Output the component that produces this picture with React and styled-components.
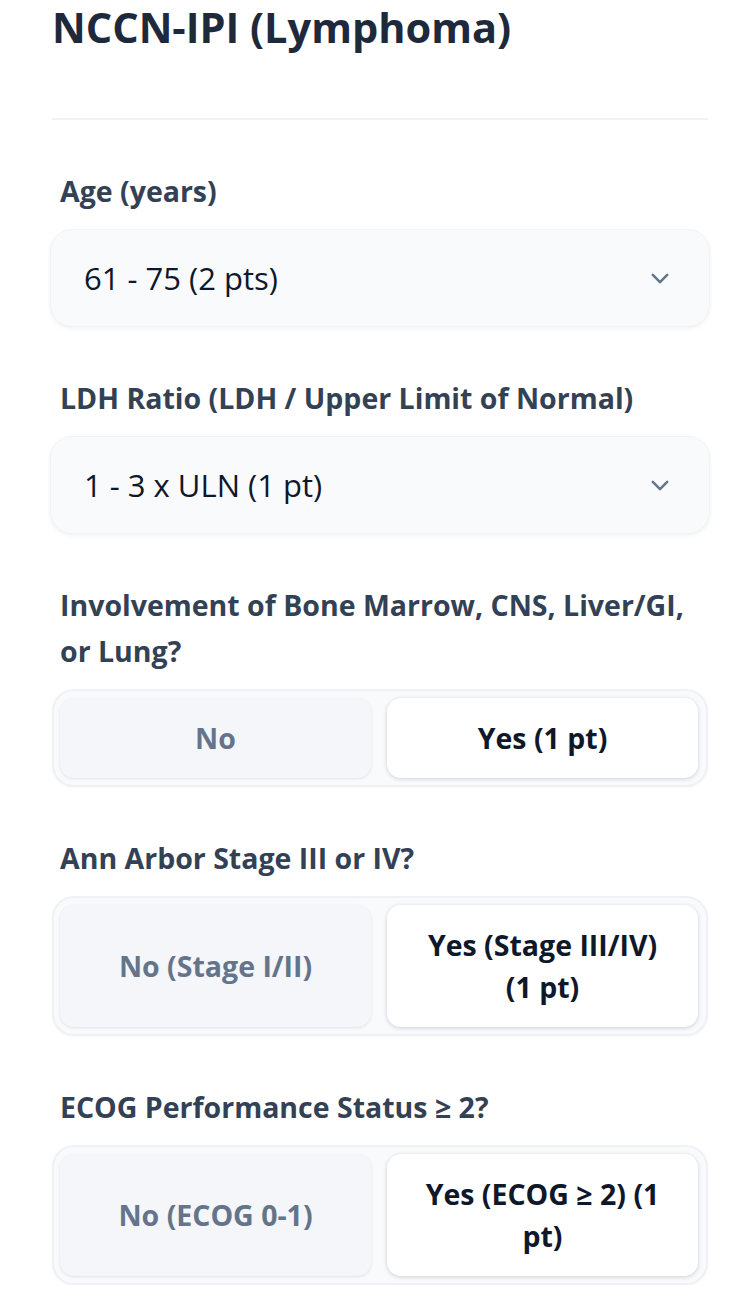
import React, { useState } from 'react';
import styled, { createGlobalStyle } from 'styled-components';

const GlobalStyle = createGlobalStyle`
  body {
    margin: 0;
    background: #ffffff;
    font-family: "Open Sans", "Noto Sans", sans-serif;
  }
`;

const fields = [
  {
    id: 'age',
    type: 'select',
    label: 'Age (years)',
    value: '61 - 75 (2 pts)',
  },
  {
    id: 'ldh',
    type: 'select',
    label: 'LDH Ratio (LDH / Upper Limit of Normal)',
    value: '1 - 3 x ULN (1 pt)',
  },
  {
    id: 'extranodal',
    type: 'toggle',
    label: 'Involvement of Bone Marrow, CNS, Liver/GI, or Lung?',
    options: ['No', 'Yes (1 pt)'],
    selected: 1,
  },
  {
    id: 'stage',
    type: 'toggle',
    label: 'Ann Arbor Stage III or IV?',
    options: ['No (Stage I/II)', 'Yes (Stage III/IV) (1\u00a0pt)'],
    selected: 1,
  },
  {
    id: 'ecog',
    type: 'toggle',
    label: 'ECOG Performance Status \u2265 2?',
    options: ['No (ECOG 0-1)', 'Yes (ECOG \u2265 2) (1 pt)'],
    selected: 1,
  },
];

const Chevron = () => (
  <svg width="18" height="11" viewBox="0 0 20 12" fill="none" stroke="#64748b" strokeWidth="2.8" strokeLinecap="round" strokeLinejoin="round">
    <path d="M2 2l8 8 8-8" />
  </svg>
);

const ToggleGroup = ({ options, selected }) => {
  const [active, setActive] = useState(selected);
  return (
    <Segmented>
      {options.map((opt, i) => (
        <SegButton key={opt} $active={i === active} onClick={() => setActive(i)}>
          {opt}
        </SegButton>
      ))}
    </Segmented>
  );
};

export default function App() {
  return (
    <>
      <GlobalStyle />
      <Page>
        <Title>NCCN-IPI (Lymphoma)</Title>
        <Divider />
        {fields.map((f) => (
          <Field key={f.id}>
            <Label>{f.label}</Label>
            {f.type === 'select' ? (
              <SelectBox>
                <span>{f.value}</span>
                <Chevron />
              </SelectBox>
            ) : (
              <ToggleGroup options={f.options} selected={f.selected} />
            )}
          </Field>
        ))}
      </Page>
    </>
  );
}

const Page = styled.main`
  width: 656px;
  margin-left: 52px;
`;

const Title = styled.h1`
  margin: 0;
  font-size: 41.5px;
  line-height: 54px;
  font-weight: 700;
  color: #1e293b;
`;

const Divider = styled.hr`
  border: none;
  border-top: 2px solid #f1f3f6;
  margin: 64px 0 48px;
`;

const Field = styled.section`
  display: flex;
  flex-direction: column;
  margin-bottom: 48px;

  &:last-child {
    margin-bottom: 0;
  }
`;

const Label = styled.label`
  padding-left: 8px;
  margin-bottom: 15px;
  font-size: 28.5px;
  line-height: 46px;
  font-weight: 700;
  color: #334155;
`;

const SelectBox = styled.div`
  display: flex;
  align-items: center;
  justify-content: space-between;
  height: 98px;
  margin: 0 -2px;
  padding: 0 40px 0 33px;
  box-sizing: border-box;
  background: #f8fafc;
  border: 1px solid #f0f3f7;
  border-radius: 22px;
  box-shadow: 0 2px 4px rgba(15, 23, 42, 0.05);
  font-size: 31px;
  color: #0f172a;
  cursor: pointer;
`;

const Segmented = styled.div`
  display: grid;
  grid-template-columns: 1fr 1fr;
  gap: 16px;
  padding: 7px 8px 7px 6px;
  background: #f8fafc;
  border: 2px solid #eef1f5;
  border-radius: 22px;
  box-shadow: 0 1px 3px rgba(15, 23, 42, 0.04);
`;

const SegButton = styled.button`
  padding: 19px 22px;
  border: none;
  border-radius: 14px;
  font-family: inherit;
  font-size: 28.5px;
  line-height: 42px;
  font-weight: 700;
  text-align: center;
  cursor: pointer;
  background: ${(p) => (p.$active ? '#ffffff' : '#f4f6f9')};
  color: ${(p) => (p.$active ? '#0f172a' : '#64748b')};
  box-shadow: ${(p) =>
    p.$active
      ? '0 1px 4px rgba(15, 23, 42, 0.18)'
      : '0 1px 3px rgba(15, 23, 42, 0.10)'};
`;
